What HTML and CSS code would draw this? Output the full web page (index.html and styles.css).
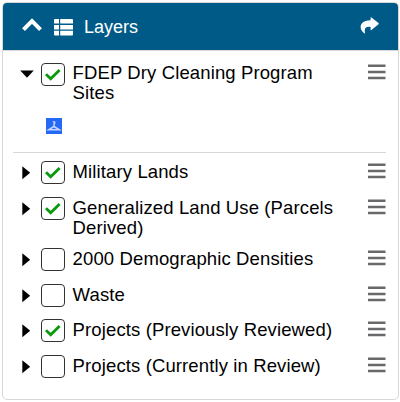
FILE: index.html
```html
<!DOCTYPE html>
<html lang="en">
<head>
<meta charset="utf-8">
<title>Layers</title>
<link rel="stylesheet" href="styles.css">
</head>
<body>
<svg class="defs" width="0" height="0">
  <symbol id="right" viewBox="0 0 14 24"><path d="M.3 4.300L8.200 10.800.3 17.300Z"/></symbol>
  <symbol id="check" viewBox="0 0 24 24"><path d="M5 11.300l4.700 4.400L18.600 7" fill="none" stroke="#0a990f" stroke-width="2.900"/></symbol>
  <symbol id="bars" viewBox="0 0 18 18"><path d="M0 2.800h17.500M0 8.900h17.500M0 15h17.500" fill="none" stroke="#69696b" stroke-width="2.500"/></symbol>
</svg>
<section class="panel">
  <header class="header">
    <svg class="chevron" viewBox="0 0 20 14"><path d="M1.500 11.700L10 3.200l8.500 8.500" fill="none" stroke="#fff" stroke-width="4"/></svg>
    <svg class="list" viewBox="0 0 19 17"><path fill="#fff" d="M1 0h4v4.600H0V1q0-1 1-1zM6.200 0H18q1 0 1 1v3.600H6.200zM0 5.900h5v4.600H0zM6.200 5.900H19v4.600H6.200zM0 11.800h5v4.600H1q-1 0-1-1zM6.200 11.800H19v3.600q0 1-1 1H6.200z"/></svg>
    <h1 class="title">Layers</h1>
    <svg class="share" viewBox="0 0 19 17"><path fill="#fff" d="M10.600 .8q0-.8.8-.3L18.500 6q.6.600 0 1.200l-7.100 5.900q-.8.500-.8-.4V9.900C6.500 9.500 3.800 10.700 5 15.700q0 1-.9.600C-1.900 11.300-.3 3.400 10.600 3.300z"/></svg>
  </header>
  <ul class="layers">
    <li class="layer open">
      <svg class="arrow" viewBox="0 0 14 24"><path d="M.2 7.400h13.600L7 14.800Z"/></svg>
      <span class="box"><svg><use href="#check"/></svg></span>
      <span class="name">FDEP Dry Cleaning Program Sites</span>
      <svg class="menu"><use href="#bars"/></svg>
      <svg class="legend" viewBox="0 0 16 16"><path fill="#2468f5" d="M0 0h16v16H0z"/><path d="M7 4.200q1-1 1.700 0Q9 5 8 6v2.500L2.500 11.800h11L8 8.500" fill="none" stroke="#c4d6ff" stroke-width="1.500"/></svg>
    </li>
    <li class="layer">
      <svg class="arrow"><use href="#right"/></svg>
      <span class="box"><svg><use href="#check"/></svg></span>
      <span class="name">Military Lands</span>
      <svg class="menu"><use href="#bars"/></svg>
    </li>
    <li class="layer tall">
      <svg class="arrow"><use href="#right"/></svg>
      <span class="box"><svg><use href="#check"/></svg></span>
      <span class="name">Generalized Land Use (Parcels Derived)</span>
      <svg class="menu"><use href="#bars"/></svg>
    </li>
    <li class="layer">
      <svg class="arrow"><use href="#right"/></svg>
      <span class="box"></span>
      <span class="name">2000 Demographic Densities</span>
      <svg class="menu"><use href="#bars"/></svg>
    </li>
    <li class="layer">
      <svg class="arrow"><use href="#right"/></svg>
      <span class="box"></span>
      <span class="name">Waste</span>
      <svg class="menu"><use href="#bars"/></svg>
    </li>
    <li class="layer">
      <svg class="arrow"><use href="#right"/></svg>
      <span class="box"><svg><use href="#check"/></svg></span>
      <span class="name">Projects (Previously Reviewed)</span>
      <svg class="menu"><use href="#bars"/></svg>
    </li>
    <li class="layer">
      <svg class="arrow"><use href="#right"/></svg>
      <span class="box"></span>
      <span class="name">Projects (Currently in Review)</span>
      <svg class="menu"><use href="#bars"/></svg>
    </li>
  </ul>
</section>
</body>
</html>
```
FILE: styles.css
```css
* { box-sizing: border-box; }
body {
  margin: 0;
  padding: 2px;
  background: #fff;
  color: #000;
  font: 18px/20px "Liberation Sans", Arial, sans-serif;
}
.defs { display: none; }
svg { display: block; }
.panel {
  width: 397px;
  height: 398px;
  border: 1px solid #d8d8d8;
  border-radius: 5px;
  overflow: hidden;
}
.header {
  display: flex;
  align-items: center;
  height: 48px;
  padding: 0 19px 0 19px;
  background: #005a87;
  border-bottom: 1px solid #d8d8d8;
  color: #fff;
}
.chevron { width: 20px; height: 14px; margin-top: -3px; }
.list { width: 19px; height: 17px; margin-left: 12px; margin-top: 1px; }
.title { margin: 0 auto 0 11px; font-size: 18px; font-weight: 400; }
.share { width: 19px; height: 17px; margin-top: -2px; }
.layers {
  margin: 0;
  padding: 12px 12px 0 10px;
  list-style: none;
}
.layer {
  display: grid;
  grid-template-columns: 14px 24px 290px 18px;
  grid-template-rows: 35.7px;
  align-items: start;
  padding-left: 7px;
}
.tall { grid-template-rows: 51.3px; }
.open {
  grid-template-rows: 55px 34px;
  border-bottom: 1px solid #d8d8d8;
  margin-bottom: 9px;
}
.arrow { width: 14px; height: 24px; margin-left: 2px; }
.open .arrow { margin-left: 0; }
.box {
  width: 24px;
  height: 23px;
  margin: -1px 0 0 7px;
  border: 1px solid #333;
  border-radius: 4px;
}
.open .box { margin-top: 0; }
.box svg { width: 24px; height: 24px; margin: -1px; }
.name {
  margin-left: 14.6px;
  padding-right: 4px;
  font-size: 18.5px;
  letter-spacing: .12px;
}
.menu { width: 18px; height: 18px; margin-left: 20px; }
.legend { grid-column: 2; width: 16px; height: 16px; margin-left: 12px; }
```
